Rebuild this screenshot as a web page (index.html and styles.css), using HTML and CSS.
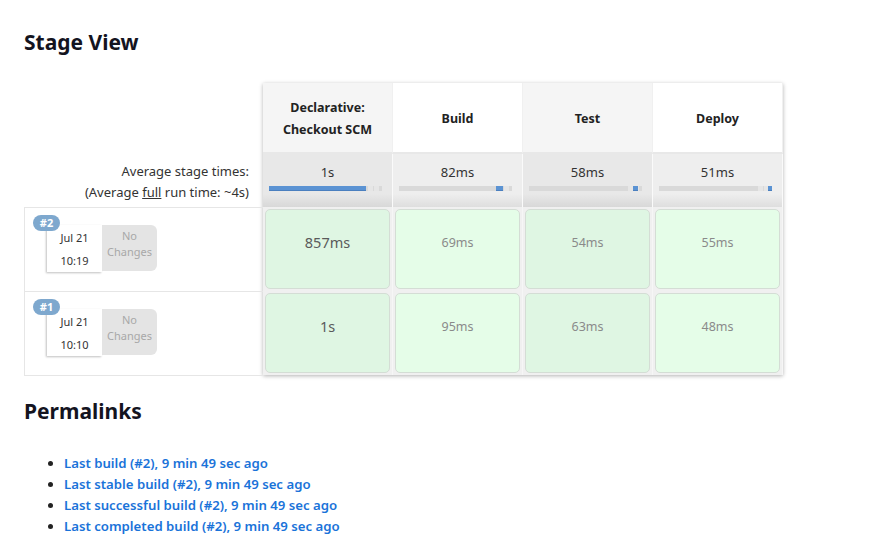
FILE: index.html
```html
<!DOCTYPE html>
<html>
<head>
<meta charset="utf-8">
<link rel="stylesheet" href="styles.css">
</head>
<body>
<div class="page">
  <h2 class="title">Stage View</h2>
  <div class="stage-view">
    <div class="labels">
      <div class="lbl-head"></div>
      <div class="lbl-avg">
        <div>Average stage times:</div>
        <div>(Average <u>full</u> run time: ~4s)</div>
      </div>
      <div class="build-row">
        <span class="badge">#2</span>
        <div class="date"><span>Jul 21</span><span>10:19</span></div>
        <div class="changes">No<br>Changes</div>
      </div>
      <div class="build-row last">
        <span class="badge">#1</span>
        <div class="date"><span>Jul 21</span><span>10:10</span></div>
        <div class="changes">No<br>Changes</div>
      </div>
    </div>
    <div class="stages">
      <div class="grid heads">
        <div class="head shade">Declarative:<br>Checkout SCM</div>
        <div class="head">Build</div>
        <div class="head shade">Test</div>
        <div class="head">Deploy</div>
      </div>
      <div class="grid avgs">
        <div class="avg shade"><span>1s</span><div class="track"><div class="fill" style="left:0;width:97px"></div></div></div>
        <div class="avg"><span>82ms</span><div class="track"><div class="fill" style="left:97px;width:7px"></div></div></div>
        <div class="avg shade"><span>58ms</span><div class="track"><div class="fill" style="left:104px;width:5px"></div></div></div>
        <div class="avg"><span>51ms</span><div class="track"><div class="fill" style="left:109px;width:4px"></div></div></div>
      </div>
      <div class="grid row">
        <div class="cell shade"><div class="box big">857ms</div></div>
        <div class="cell"><div class="box">69ms</div></div>
        <div class="cell shade"><div class="box">54ms</div></div>
        <div class="cell"><div class="box">55ms</div></div>
      </div>
      <div class="grid row">
        <div class="cell shade"><div class="box big">1s</div></div>
        <div class="cell"><div class="box">95ms</div></div>
        <div class="cell shade"><div class="box">63ms</div></div>
        <div class="cell"><div class="box">48ms</div></div>
      </div>
    </div>
  </div>
  <h2 class="title perma">Permalinks</h2>
  <ul class="links">
    <li><a href="#">Last build (#2), 9 min 49 sec ago</a></li>
    <li><a href="#">Last stable build (#2), 9 min 49 sec ago</a></li>
    <li><a href="#">Last successful build (#2), 9 min 49 sec ago</a></li>
    <li><a href="#">Last completed build (#2), 9 min 49 sec ago</a></li>
  </ul>
</div>
</body>
</html>
```
FILE: styles.css
```css
html, body {
  margin: 0;
  padding: 0;
  background: #fff;
}
body {
  font-family: "Noto Sans", "Open Sans", sans-serif;
  color: #333;
  font-size: 13px;
}
.page {
  padding: 29px 24px 0 24px;
}
.title {
  margin: 0;
  font-size: 21px;
  line-height: 26px;
  font-weight: 700;
  color: #14141f;
}
.stage-view {
  margin-top: 28px;
  display: flex;
  align-items: flex-start;
}
.labels {
  width: 239px;
  display: flex;
  flex-direction: column;
}
.lbl-head {
  height: 71px;
}
.lbl-avg {
  height: 53px;
  box-sizing: border-box;
  padding: 7px 14px 0 0;
  text-align: right;
  line-height: 21px;
  color: #333;
  font-size: 13px;
}
.build-row {
  position: relative;
  height: 84px;
  box-sizing: border-box;
  border: 1px solid #e6e6e6;
  border-right: none;
  border-bottom: none;
  display: flex;
  align-items: flex-start;
  padding: 17px 0 0 22px;
}
.build-row.last {
  border-bottom: 1px solid #e6e6e6;
  height: 85px;
}
.badge {
  position: absolute;
  left: 8px;
  top: 7px;
  width: 27px;
  height: 16px;
  border-radius: 8px;
  background: #7ea8ce;
  color: #fff;
  font-size: 11px;
  font-weight: 700;
  line-height: 16px;
  text-align: center;
  z-index: 2;
}
.date {
  width: 55px;
  height: 47px;
  background: #fff;
  box-shadow: -1px 1px 2px rgba(0, 0, 0, 0.25);
  display: flex;
  flex-direction: column;
  align-items: center;
  justify-content: center;
  font-size: 11px;
  line-height: 23px;
  color: #333;
}
.changes {
  width: 55px;
  height: 46px;
  background: #e4e4e4;
  border-radius: 0 6px 6px 0;
  color: #a8a8a8;
  font-size: 11px;
  line-height: 16px;
  text-align: center;
  padding-top: 3px;
  box-sizing: border-box;
}
.stages {
  width: 520px;
  box-shadow: 0 1px 4px rgba(0, 0, 0, 0.3);
  background: #f0f0f0;
}
.grid {
  display: grid;
  grid-template-columns: repeat(4, 130px);
}
.heads {
  height: 71px;
}
.head {
  background: #fff;
  display: flex;
  align-items: center;
  justify-content: center;
  text-align: center;
  font-weight: 700;
  line-height: 22px;
  font-size: 12.5px;
  padding-top: 2px;
  color: #222;
  border-right: 1px solid #f0f0f0;
  border-bottom: 2px solid #e8e8e8;
}
.head.shade {
  background: #f5f5f5;
}
.avgs {
  height: 53px;
}
.avg {
  position: relative;
  background: linear-gradient(#eeeeee 0, #eeeeee 40px, #dedede 53px);
  border-right: 1px solid #fafafa;
  text-align: center;
  padding-top: 9px;
  box-sizing: border-box;
  line-height: 18px;
}
.avg.shade {
  background: linear-gradient(#e8e8e8 0, #e8e8e8 40px, #d8d8d8 53px);
}
.track {
  position: relative;
  margin: 5px 0 0 6px;
  width: 113px;
  height: 5px;
  background: linear-gradient(90deg, #d9d9d9 0, #d9d9d9 88%, #e6e6e6 88%, #e6e6e6 92%, #d9d9d9 92%, #d9d9d9 93%, #e6e6e6 93%, #e6e6e6 97%, #d9d9d9 97%);
}
.fill {
  position: absolute;
  top: 0;
  height: 5px;
  background: #5b93d3;
  box-shadow: inset 0 -1px 0 #4a7fbf;
}
.row {
  height: 84px;
}
.cell {
  padding: 2px;
  border-right: 1px solid #f6f6f6;
  background: #f0f0f0;
}
.box {
  height: 100%;
  box-sizing: border-box;
  border: 1px solid #d4ddd5;
  border-radius: 5px;
  background: #e5fde8;
  display: flex;
  align-items: center;
  justify-content: center;
  padding-bottom: 14px;
  color: #8a8a8a;
  font-size: 12.5px;
}
.shade .box {
  background: #dff6e3;
}
.box.big {
  font-size: 14.5px;
  color: #5a5a5a;
}
.perma {
  margin-top: 22px;
}
.links {
  margin: 29px 0 0 0;
  padding-left: 40px;
  line-height: 21px;
  font-size: 13.2px;
  color: #222;
}
.links a {
  color: #1a73d9;
  text-decoration: none;
  font-weight: 600;
}
```
